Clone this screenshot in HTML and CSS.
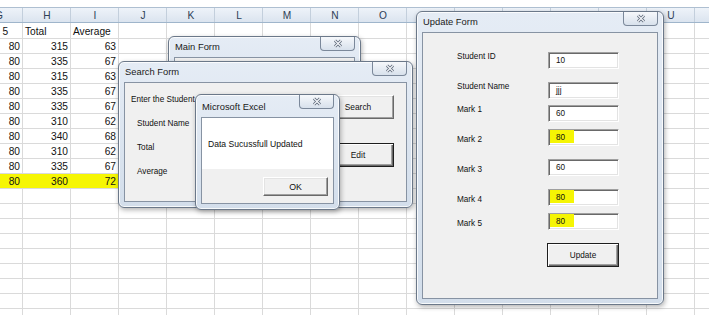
FILE: index.html
```html
<!DOCTYPE html>
<html>
<head>
<meta charset="utf-8">
<title>Excel Forms</title>
<link rel="stylesheet" href="styles.css">
</head>
<body>
<div class="sheet">
  <div class="row hdr">
    <div class="c">G</div><div class="c">H</div><div class="c">I</div><div class="c">J</div>
    <div class="c">K</div><div class="c">L</div><div class="c">M</div><div class="c">N</div>
    <div class="c">O</div><div class="c">P</div><div class="c">Q</div><div class="c">R</div>
    <div class="c">S</div><div class="c">T</div><div class="c">U</div><div class="c"></div>
  </div>
  <div class="row r1"><div class="c l">Mark 5</div><div class="c l">Total</div><div class="c l">Average</div></div>
  <div class="row"><div class="c">80</div><div class="c">315</div><div class="c">63</div></div>
  <div class="row"><div class="c">80</div><div class="c">335</div><div class="c">67</div></div>
  <div class="row"><div class="c">80</div><div class="c">315</div><div class="c">63</div></div>
  <div class="row"><div class="c">80</div><div class="c">335</div><div class="c">67</div></div>
  <div class="row"><div class="c">80</div><div class="c">335</div><div class="c">67</div></div>
  <div class="row"><div class="c">80</div><div class="c">310</div><div class="c">62</div></div>
  <div class="row"><div class="c">80</div><div class="c">340</div><div class="c">68</div></div>
  <div class="row"><div class="c">80</div><div class="c">310</div><div class="c">62</div></div>
  <div class="row"><div class="c">80</div><div class="c">335</div><div class="c">67</div></div>
  <div class="row"><div class="c hl">80</div><div class="c hl">360</div><div class="c hl">72</div></div>
  <div class="row"></div><div class="row"></div><div class="row"></div><div class="row"></div>
  <div class="row"></div><div class="row"></div><div class="row"></div><div class="row"></div>
  <div class="row"></div>
</div>

<div class="win w-main">
  <div class="titlebar"><span class="title">Main Form</span><span class="close"><svg width="10" height="9" viewBox="0 0 10 9"><path d="M2 1.5L8 7.5M8 1.5L2 7.5" stroke="#5f6a7b" stroke-width="3"/><path d="M2 1.5L8 7.5M8 1.5L2 7.5" stroke="#f4f6f9" stroke-width="1.2"/></svg></span></div>
  <div class="client"></div>
</div>

<div class="win w-search">
  <div class="titlebar"><span class="title">Search Form</span><span class="close"><svg width="10" height="9" viewBox="0 0 10 9"><path d="M2 1.5L8 7.5M8 1.5L2 7.5" stroke="#5f6a7b" stroke-width="3"/><path d="M2 1.5L8 7.5M8 1.5L2 7.5" stroke="#f4f6f9" stroke-width="1.2"/></svg></span></div>
  <div class="client sbody">
    <div class="scol">
      <div class="lbl">Enter the Student ID</div>
      <div class="lbl ind">Student Name</div>
      <div class="lbl ind">Total</div>
      <div class="lbl ind">Average</div>
    </div>
    <div class="bcol">
      <div class="btn sbtn">Search</div>
      <div class="btn sbtn default">Edit</div>
    </div>
  </div>
</div>

<div class="win w-msg">
  <div class="titlebar tall"><span class="title">Microsoft Excel</span><span class="close"><svg width="10" height="9" viewBox="0 0 10 9"><path d="M2 1.5L8 7.5M8 1.5L2 7.5" stroke="#5f6a7b" stroke-width="3"/><path d="M2 1.5L8 7.5M8 1.5L2 7.5" stroke="#f4f6f9" stroke-width="1.2"/></svg></span></div>
  <div class="client mbody">
    <div class="mtext">Data Sucussfull Updated</div>
    <div class="mfoot"><div class="btn okbtn">OK</div></div>
  </div>
</div>

<div class="win w-update">
  <div class="titlebar"><span class="title">Update Form</span><span class="close"><svg width="10" height="9" viewBox="0 0 10 9"><path d="M2 1.5L8 7.5M8 1.5L2 7.5" stroke="#5f6a7b" stroke-width="3"/><path d="M2 1.5L8 7.5M8 1.5L2 7.5" stroke="#f4f6f9" stroke-width="1.2"/></svg></span></div>
  <div class="client">
    <div class="ufields">
      <div class="lbl up">Student ID</div><div class="tb">10</div>
      <div class="lbl up">Student Name</div><div class="tb">jjj</div>
      <div class="lbl up">Mark 1</div><div class="tb">60</div>
      <div class="lbl dn">Mark 2</div><div class="tb"><span class="hi">80</span></div>
      <div class="lbl dn">Mark 3</div><div class="tb">60</div>
      <div class="lbl dn">Mark 4</div><div class="tb"><span class="hi">80</span></div>
      <div class="lbl dn">Mark 5</div><div class="tb"><span class="hi">80</span></div>
      <div class="btn default ubtn">Update</div>
    </div>
  </div>
</div>
</body>
</html>
```
FILE: styles.css
```css
* { box-sizing: border-box; }
html, body { margin: 0; padding: 0; }
body {
  width: 709px;
  height: 315px;
  overflow: hidden;
  position: relative;
  background: #ffffff;
  font-family: "Liberation Sans", Arial, sans-serif;
  color: #111;
}

/* ---------- spreadsheet ---------- */
.sheet {
  padding-top: 7px;
  margin-left: -25px;
  width: 800px;
}
.row {
  display: grid;
  grid-template-columns: repeat(16, 48px);
  height: 15px;
  border-bottom: 1px solid #dadada;
  background-image: repeating-linear-gradient(90deg, transparent 0 47px, #dadada 47px 48px);
  font-size: 10.2px;
}
.row.r1 { height: 16px; }
.row.hdr {
  height: 16px;
  border-top: 1px solid #aebfd1;
  border-bottom: 1px solid #9fb5cb;
  background-image:
    repeating-linear-gradient(90deg, transparent 0 47px, #c3cfdc 47px 48px),
    linear-gradient(#eef3f9, #dbe4ef);
}
.c {
  display: flex;
  align-items: flex-end;
  justify-content: flex-end;
  padding: 0 3px 1px 2px;
  line-height: 11px;
  white-space: nowrap;
  overflow: hidden;
}
.c.l { justify-content: flex-start; }
.hdr .c { justify-content: center; align-items: center; padding: 0; color: #2e3f56; }
.c.hl { background: #f6f604; }

/* ---------- windows ---------- */
.win {
  position: absolute;
  display: flex;
  flex-direction: column;
  padding: 0 5px 5px;
  border: 1px solid #6b7889;
  border-radius: 6px;
  background: linear-gradient(#e5ecf5, #d3deeb);
  box-shadow: inset 0 0 0 1px rgba(255,255,255,0.8), 1px 2px 5px rgba(0,0,0,0.3);
}
.titlebar {
  flex: none;
  height: 20px;
  display: flex;
  justify-content: space-between;
  align-items: flex-start;
}
.titlebar.tall { height: 22px; }
.title {
  font-size: 9.4px;
  line-height: 20px;
  padding-left: 1px;
  color: #1a1a1a;
}
.titlebar.tall .title { line-height: 23px; }
.close {
  width: 35px;
  height: 14px;
  border: 1px solid #7b889a;
  border-top: 0;
  border-radius: 0 0 4px 4px;
  background: linear-gradient(#f6f8fb, #d8e1ec);
  display: flex;
  align-items: center;
  justify-content: center;
}
.close svg { display: block; }
.client {
  flex: 1;
  border: 1px solid #8793a3;
  background: #f0f0f0;
}

.w-main   { left: 168px; top: 36px; width: 193px; height: 100px; }
.w-search { left: 118px; top: 61px; width: 295px; height: 147px; }
.w-msg    { left: 195px; top: 94px; width: 145px; height: 116px; }
.w-update { left: 416px; top: 11px; width: 248px; height: 294px; }

/* ---------- controls ---------- */
.lbl {
  font-size: 8.2px;
  line-height: 12px;
  white-space: nowrap;
  color: #111;
}
.btn {
  display: flex;
  align-items: center;
  justify-content: center;
  font-size: 8.4px;
  color: #111;
  background: #f0f0f0;
  border: 1px solid;
  border-color: #ffffff #696969 #696969 #ffffff;
  box-shadow: inset -1px -1px #a0a0a0, inset 1px 1px #e3e3e3;
}
.btn.default {
  border-color: #1e1e1e;
  box-shadow: inset 1px 1px #ffffff, inset -1px -1px #696969, inset -2px -2px #a0a0a0;
}

/* search form */
.sbody {
  display: flex;
  justify-content: space-between;
  padding: 11px 12px 0 6px;
}
.scol { display: flex; flex-direction: column; gap: 12px; }
.lbl.ind { padding-left: 6px; }
.bcol { display: flex; flex-direction: column; gap: 24px; padding-top: 1px; }
.sbtn { width: 72px; height: 24px; }

/* message box */
.mbody { display: flex; flex-direction: column; }
.mtext {
  height: 51px;
  background: #ffffff;
  display: flex;
  align-items: center;
  padding-left: 6px;
  font-size: 8.6px;
  color: #111;
}
.mfoot { display: flex; justify-content: flex-end; padding: 8px 5px 0 0; }
.okbtn { width: 65px; height: 19px; font-size: 8.8px; }

/* update form */
.ufields {
  display: grid;
  grid-template-columns: 91px 71px;
  grid-template-rows: 30px 23px 24px 30px 30px 24px 30px 24px;
  padding: 19px 0 0 34px;
}
.ufields .lbl { align-self: start; }
.lbl.up { margin-top: -1px; }
.lbl.dn { margin-top: 5px; }
.tb {
  align-self: start;
  height: 17px;
  display: flex;
  align-items: center;
  padding-left: 7px;
  font-size: 8.2px;
  background: #ffffff;
  border: 1px solid;
  border-color: #a0a0a0 #ffffff #ffffff #a0a0a0;
  box-shadow: inset 1px 1px #696969, inset -1px -1px #e3e3e3;
  color: #111;
}
.hi {
  display: inline-block;
  line-height: 10px;
  margin-left: -6px;
  padding: 0 9px 0 6px;
  background: #f5f504;
  box-shadow: 0 -3px 0 #f5f504;
}
.ubtn { grid-column: 2; grid-row: 8; height: 24px; width: 72px; margin-left: -1px; font-size: 8.2px; }
```
